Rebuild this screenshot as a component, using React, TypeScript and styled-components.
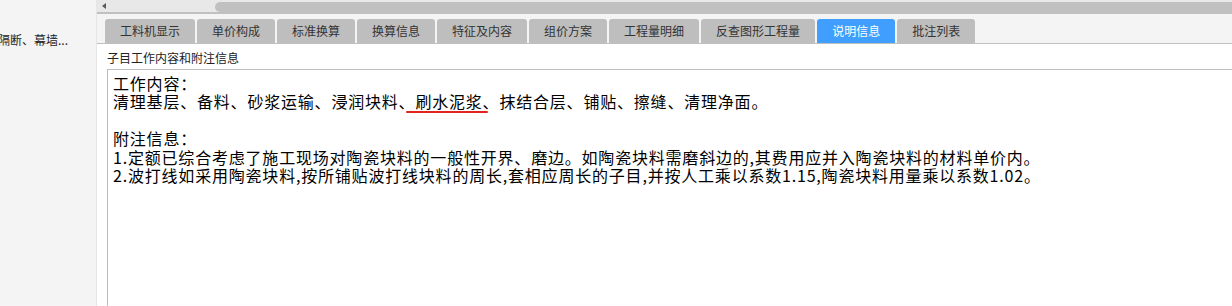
import React from 'react';
import styled, { createGlobalStyle } from 'styled-components';

const GlobalStyle = createGlobalStyle`
  html, body {
    margin: 0;
    padding: 0;
    background: #ffffff;
    overflow: hidden;
  }
  body {
    font-family: "Noto Sans CJK SC", "Noto Sans", sans-serif;
  }
`;

const Page = styled.div`
  display: flex;
  width: 1232px;
  height: 306px;
  overflow: hidden;
`;

const SidePanel = styled.div`
  flex: none;
  width: 97px;
  box-sizing: border-box;
  padding-top: 31px;
  background: #f4f4f4;
  border-right: 1px solid #e6e6e6;
  overflow: hidden;
`;

const SideItem = styled.div`
  font-size: 12px;
  line-height: 18px;
  color: #1e1e1e;
  white-space: nowrap;
  text-indent: -2px;
`;

const Main = styled.div`
  flex: 1;
  min-width: 0;
  display: flex;
  flex-direction: column;
`;

const HScroll = styled.div`
  flex: none;
  height: 14px;
  box-sizing: border-box;
  padding-top: 2px;
  display: flex;
  align-items: flex-start;
  background: #e8e8e8;
  border-bottom: 2px solid #c0c0c0;
`;

const ScrollArrow = styled.span`
  flex: none;
  width: 0;
  height: 0;
  margin: 1px 0 0 5px;
  border-right: 4px solid #5a5a5a;
  border-top: 3.5px solid transparent;
  border-bottom: 3.5px solid transparent;
`;

const ScrollThumb = styled.span`
  flex: 1;
  height: 10px;
  margin-left: 109px;
  border-radius: 5px 0 0 5px;
  background: #c0c0c0;
`;

const TabBar = styled.div`
  flex: none;
  display: flex;
  gap: 2px;
  padding: 5px 0 0 8px;
  background: #f4f4f4;
  border-bottom: 1px solid #c0c0c0;
`;

const Tab = styled.div<{ active?: boolean }>`
  height: 24px;
  padding: 0 15px;
  font-size: 12px;
  line-height: 24px;
  white-space: nowrap;
  color: ${(p) => (p.active ? '#ffffff' : '#333333')};
  background: ${(p) => (p.active ? '#409eff' : '#bebebe')};
  border-radius: 3px 3px 0 0;
`;

const Content = styled.div`
  flex: 1;
  min-height: 0;
  display: flex;
  flex-direction: column;
  padding-left: 10px;
  background: #ffffff;
`;

const Caption = styled.div`
  flex: none;
  padding-top: 2px;
  font-size: 12px;
  line-height: 23px;
  color: #222222;
`;

const NoteBox = styled.div`
  flex: 1;
  padding: 4px 5px;
  border-top: 1px solid #bdbdbd;
  border-left: 1px solid #bdbdbd;
  font-family: "Noto Sans CJK SC", sans-serif;
  font-size: 16px;
  letter-spacing: 0.8px;
  line-height: 18.4px;
  color: #000000;
  white-space: pre;
`;

const NoteLine = styled.div`
  min-height: 18.4px;
`;

const Marked = styled.span`
  position: relative;
  &::after {
    content: '';
    position: absolute;
    left: -9px;
    right: -5px;
    bottom: 0;
    height: 2px;
    border-radius: 1px;
    background: #e3231f;
  }
`;

const tabs = [
  '工料机显示',
  '单价构成',
  '标准换算',
  '换算信息',
  '特征及内容',
  '组价方案',
  '工程量明细',
  '反查图形工程量',
  '说明信息',
  '批注列表',
];

export default function App() {
  return (
    <>
      <GlobalStyle />
      <Page>
        <SidePanel>
          <SideItem>隔断、幕墙...</SideItem>
        </SidePanel>
        <Main>
          <HScroll>
            <ScrollArrow />
            <ScrollThumb />
          </HScroll>
          <TabBar>
            {tabs.map((t) => (
              <Tab key={t} active={t === '说明信息'}>
                {t}
              </Tab>
            ))}
          </TabBar>
          <Content>
            <Caption>子目工作内容和附注信息</Caption>
            <NoteBox>
              <NoteLine>工作内容：</NoteLine>
              <NoteLine>
                清理基层、备料、砂浆运输、浸润块料、<Marked>刷水泥浆</Marked>、抹结合层、铺贴、擦缝、清理净面。
              </NoteLine>
              <NoteLine />
              <NoteLine>附注信息：</NoteLine>
              <NoteLine>
                1.定额已综合考虑了施工现场对陶瓷块料的一般性开界、磨边。如陶瓷块料需磨斜边的,其费用应并入陶瓷块料的材料单价内。
              </NoteLine>
              <NoteLine>
                2.波打线如采用陶瓷块料,按所铺贴波打线块料的周长,套相应周长的子目,并按人工乘以系数1.15,陶瓷块料用量乘以系数1.02。
              </NoteLine>
            </NoteBox>
          </Content>
        </Main>
      </Page>
    </>
  );
}
